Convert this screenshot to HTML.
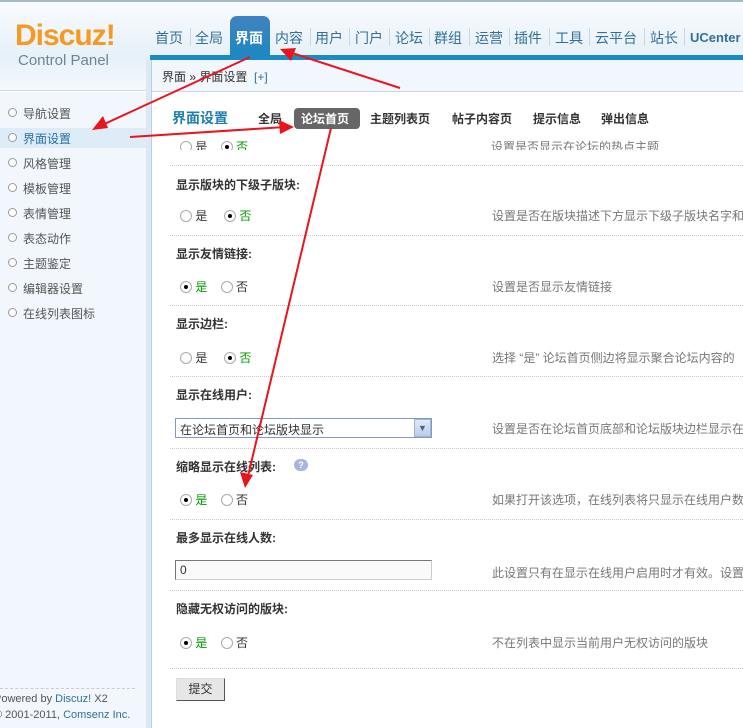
<!DOCTYPE html>
<html><head><meta charset="utf-8"><style>
*{margin:0;padding:0;box-sizing:border-box}
body{width:743px;height:728px;overflow:hidden;position:relative;background:#fff;font-family:"Liberation Sans","Noto Sans CJK SC","WenQuanYi Zen Hei",sans-serif;font-size:12px;color:#333}
.a{position:absolute;white-space:nowrap}
#hd{left:0;top:0;width:743px;height:60px;background:linear-gradient(#f7fbfe,#e6f0f8);border-top:2px solid #a8b8c8}
#hdl{left:0;top:60px;width:146px;height:31px;background:linear-gradient(#e9f2f9,#f4f9fd);border-bottom:1px solid #c9d7e3}
#bar{left:150px;top:55px;width:593px;height:5px;background:#1a8cc3}
#bc{left:150px;top:60px;width:593px;height:32px;background:#f1f7fc;border-bottom:1px solid #c9d7e3}
#side{left:0;top:92px;width:146px;height:636px;background:#f1f7fd}
#sedge{left:146px;top:60px;width:6px;height:668px;background:#dbe9f5;border-right:1px solid #b8cfe2}
.nav{top:28px;font-size:14px;color:#336f99;}
.sep{top:28px;width:1px;height:18px;background:#c8d8e6}
.si{left:8px;font-size:12px;color:#555}
.si:before{content:"";display:inline-block;width:7px;height:7px;border:1px solid #999;border-radius:50%;margin-right:6px;vertical-align:1px;background:#fff}
.lbl{left:176px;font-weight:bold;color:#333;font-size:12px}
.dot{left:170px;width:573px;border-top:1px dotted #ccc}
.r{display:inline-block;width:12px;height:12px;border:1px solid #aaa;border-radius:50%;background:#fff;vertical-align:-2px;position:relative}
.r.on:after{content:"";position:absolute;left:3px;top:3px;width:4px;height:4px;border-radius:50%;background:#000}
.g{color:#090}
.desc{left:492px;color:#777}
.tab{top:110px;font-weight:bold;font-size:12px;color:#333}
</style></head><body>
<div class="a" id="hd"></div>
<div class="a" id="hdl"></div>
<div class="a" style="left:15px;top:19px;font-size:30px;font-weight:bold;color:#f59a23;letter-spacing:-1px">Discuz!</div>
<div class="a" style="left:18px;top:52px;font-size:15px;color:#6c8597">Control Panel</div>
<div class="a" id="bar"></div>
<div class="a" style="left:230px;top:16px;width:40px;height:42px;background:linear-gradient(#3f82bf,#1c88c4);border-radius:7px 7px 0 0"></div>
<div class="a nav" style="left:155px">首页</div><div class="a sep" style="left:190px"></div>
<div class="a nav" style="left:195px">全局</div>
<div class="a nav" style="left:235px;color:#fff;font-weight:bold">界面</div>
<div class="a nav" style="left:275px">内容</div><div class="a sep" style="left:310px"></div>
<div class="a nav" style="left:315px">用户</div><div class="a sep" style="left:349px"></div>
<div class="a nav" style="left:355px">门户</div><div class="a sep" style="left:389px"></div>
<div class="a nav" style="left:395px">论坛</div><div class="a sep" style="left:429px"></div>
<div class="a nav" style="left:434px">群组</div><div class="a sep" style="left:469px"></div>
<div class="a nav" style="left:475px">运营</div><div class="a sep" style="left:509px"></div>
<div class="a nav" style="left:514px">插件</div><div class="a sep" style="left:549px"></div>
<div class="a nav" style="left:555px">工具</div><div class="a sep" style="left:589px"></div>
<div class="a nav" style="left:595px">云平台</div><div class="a sep" style="left:644px"></div>
<div class="a nav" style="left:650px">站长</div><div class="a sep" style="left:684px"></div>
<div class="a nav" style="left:690px;font-weight:bold;font-size:13px;top:30px">UCenter</div>
<div class="a" id="bc"></div>
<div class="a" style="left:162px;top:68px;color:#333">界面 » 界面设置 &nbsp;<span style="color:#336f99">[+]</span></div>
<div class="a" id="side"></div>
<div class="a" style="left:0;top:128px;width:146px;height:20px;background:#deecf8"></div>
<div class="a" id="sedge"></div>
<div class="a si" style="top:105px">导航设置</div>
<div class="a si" style="top:130px;color:#2a6ea8">界面设置</div>
<div class="a si" style="top:155px">风格管理</div>
<div class="a si" style="top:180px">模板管理</div>
<div class="a si" style="top:205px">表情管理</div>
<div class="a si" style="top:230px">表态动作</div>
<div class="a si" style="top:255px">主题鉴定</div>
<div class="a si" style="top:280px">编辑器设置</div>
<div class="a si" style="top:305px">在线列表图标</div>
<div class="a" style="left:0;top:688px;width:135px;border-top:1px dashed #ccc"></div>
<div class="a" style="left:-6px;top:693px;color:#555;font-size:11px">Powered by <span style="color:#336f99">Discuz!</span> X2</div>
<div class="a" style="left:-6px;top:709px;color:#555;font-size:11px">© 2001-2011, <span style="color:#336f99">Comsenz Inc.</span></div>
<div class="a" style="left:172px;top:108px;font-size:14px;font-weight:bold;color:#1e7fb0">界面设置</div>
<div class="a tab" style="left:258px">全局</div>
<div class="a" style="left:294px;top:108px;width:66px;height:21px;background:#666;border-radius:4px"></div>
<div class="a tab" style="left:301px;color:#fff">论坛首页</div>
<div class="a tab" style="left:370px">主题列表页</div>
<div class="a tab" style="left:452px">帖子内容页</div>
<div class="a tab" style="left:533px">提示信息</div>
<div class="a tab" style="left:601px">弹出信息</div>
<div class="a" style="left:180px;top:138px;overflow:hidden;height:12px"><span class="r"></span> 是 &nbsp;&nbsp; <span class="r on"></span> <span class="g">否</span></div>
<div class="a desc" style="left:491px;top:138px;height:12px;overflow:hidden">设置是否显示在论坛的热点主题</div>
<div class="a dot" style="top:165px"></div>
<div class="a lbl" style="top:176px">显示版块的下级子版块:</div>
<div class="a" style="left:180px;top:207px"><span class="r"></span> 是 &nbsp;&nbsp;&nbsp; <span class="r on"></span> <span class="g">否</span></div>
<div class="a desc" style="top:207px">设置是否在版块描述下方显示下级子版块名字和</div>
<div class="a dot" style="top:235px"></div>
<div class="a lbl" style="top:245px">显示友情链接:</div>
<div class="a" style="left:180px;top:278px"><span class="r on"></span> <span class="g">是</span> &nbsp;&nbsp; <span class="r"></span> 否</div>
<div class="a desc" style="top:278px">设置是否显示友情链接</div>
<div class="a dot" style="top:305px"></div>
<div class="a lbl" style="top:315px">显示边栏:</div>
<div class="a" style="left:180px;top:349px"><span class="r"></span> 是 &nbsp;&nbsp;&nbsp; <span class="r on"></span> <span class="g">否</span></div>
<div class="a desc" style="top:349px">选择 “是” 论坛首页侧边将显示聚合论坛内容的</div>
<div class="a dot" style="top:376px"></div>
<div class="a lbl" style="top:386px">显示在线用户:</div>
<div class="a" style="left:175px;top:418px;width:257px;height:20px;border:1px solid #7f9db9;background:#fff;padding:2px 4px">在论坛首页和论坛版块显示</div>
<div class="a" style="left:414px;top:419px;width:17px;height:18px;background:linear-gradient(#dfe9f7,#b9cdec);border:1px solid #9fb5d8;font-size:9px;text-align:center;line-height:16px;color:#4d6185">▼</div>
<div class="a desc" style="top:420px">设置是否在论坛首页底部和论坛版块边栏显示在</div>
<div class="a dot" style="top:448px"></div>
<div class="a lbl" style="top:458px">缩略显示在线列表:</div>
<div class="a" style="left:294px;top:459px;width:14px;height:12px;border-radius:6px;background:#a7b6dd;color:#fff;font-size:9px;text-align:center;line-height:12px;font-weight:bold">?</div>
<div class="a" style="left:180px;top:491px"><span class="r on"></span> <span class="g">是</span> &nbsp;&nbsp; <span class="r"></span> 否</div>
<div class="a desc" style="top:491px">如果打开该选项，在线列表将只显示在线用户数</div>
<div class="a dot" style="top:519px"></div>
<div class="a lbl" style="top:529px">最多显示在线人数:</div>
<div class="a" style="left:175px;top:560px;width:257px;height:20px;border:1px solid #888;border-color:#777 #ccc #ccc #777;background:#fafafa;padding:2px 4px">0</div>
<div class="a desc" style="top:564px">此设置只有在显示在线用户启用时才有效。设置</div>
<div class="a dot" style="top:590px"></div>
<div class="a lbl" style="top:600px">隐藏无权访问的版块:</div>
<div class="a" style="left:180px;top:634px"><span class="r on"></span> <span class="g">是</span> &nbsp;&nbsp; <span class="r"></span> 否</div>
<div class="a desc" style="top:634px">不在列表中显示当前用户无权访问的版块</div>
<div class="a dot" style="top:668px"></div>
<div class="a" style="left:176px;top:678px;width:49px;height:23px;background:#e6e6e6;border:1px solid;border-color:#ddd #555 #555 #ddd;text-align:center;line-height:21px">提交</div>
<svg class="a" style="left:0;top:0" width="743" height="728">
<g stroke="#e8141e" stroke-width="2" fill="none">
<line x1="250" y1="57" x2="100" y2="126"/>
<line x1="130" y1="137" x2="285" y2="127"/>
<line x1="331" y1="128" x2="248" y2="476"/>
<line x1="400" y1="88" x2="292" y2="53"/>
</g>
<path d="M92,130 L103,116 L108,128z" fill="#e8141e"/>
<path d="M294,127 L279,120 L280,134z" fill="#e8141e"/>
<path d="M245,488 L240,472 L253,475z" fill="#e8141e"/>
<path d="M280,49 L296,48 L291,61z" fill="#e8141e"/>
</svg>
</body></html>
